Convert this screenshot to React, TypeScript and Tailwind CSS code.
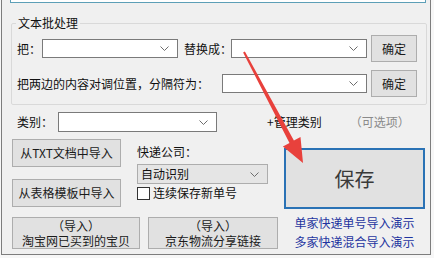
import React from "react";

const font = { fontFamily: '"Noto Sans CJK SC", "Noto Sans", sans-serif' };

function Chevron() {
  return (
    <svg width="9" height="5" viewBox="0 0 9 5" className="mr-[8px] shrink-0">
      <path d="M0.5 0.5 L4.5 4.5 L8.5 0.5" fill="none" stroke="#6d6d6d" strokeWidth="1" />
    </svg>
  );
}

function Combo({ w, text, gray }: { w: string; text?: string; gray?: boolean }) {
  return (
    <div
      className={`${w} h-[19px] shrink-0 flex items-center justify-between border ${
        gray ? "bg-[#e5e5e5] border-[#adadad]" : "bg-white border-[#7a7a7a]"
      }`}
    >
      <span className="pl-[3px] leading-none">{text}</span>
      <Chevron />
    </div>
  );
}

function Btn({ className, children }: { className: string; children: React.ReactNode }) {
  return (
    <button
      className={`shrink-0 whitespace-nowrap flex flex-col items-center justify-center bg-[#e1e1e1] border border-[#adadad] text-[#1a1a1a] ${className}`}
    >
      {children}
    </button>
  );
}

function App() {
  return (
    <div
      className="w-[434px] h-[258px] bg-[#f7f7f7] overflow-hidden relative text-[12px] text-[#111] whitespace-nowrap"
      style={font}
    >
      <div className="ml-[1px] w-[430px] h-[255px] bg-[#f0f0f0] border-l border-r border-b border-[#7d7d7d] flex flex-col">
        {/* top text box edge */}
        <div className="ml-[8px] w-[416px] h-[3px] bg-white border-l border-r border-b border-[#5d9fb7]" />

        {/* 文本批处理 */}
        <fieldset className="ml-[9px] mt-[13px] w-[416px] border border-[#d9d9d9] rounded-[2px] p-0 pb-[7px]">
          <legend className="ml-[4px] px-[2px] leading-[14px]">文本批处理</legend>
          <div className="mt-[5px] h-[27px] grid grid-cols-[25px_136px_53px_136px_50px] items-center pl-[5px]">
            <span>把：</span>
            <Combo w="w-[136px]" />
            <span className="pl-[6px]">替换成：</span>
            <Combo w="w-[136px]" />
            <Btn className="ml-[4px] w-[46px] h-[27px]">确定</Btn>
          </div>
          <div className="mt-[8px] h-[27px] grid grid-cols-[205px_145px_50px] items-center pl-[5px]">
            <span>把两边的内容对调位置，分隔符为：</span>
            <Combo w="w-[145px]" />
            <Btn className="ml-[4px] w-[46px] h-[27px]">确定</Btn>
          </div>
        </fieldset>

        {/* 类别 */}
        <div className="mt-[7px] h-[20px] flex items-center ml-[15px]">
          <span className="w-[41px] shrink-0">类别：</span>
          <Combo w="w-[159px] h-[20px]" />
          <span className="ml-[50px]">+管理类别</span>
          <span className="ml-[28px] text-[#8a8a8a]">（可选项）</span>
        </div>

        {/* lower area */}
        <div className="mt-[7px] flex">
          <div className="ml-[10px] flex flex-col">
            <div className="flex">
              <div className="flex flex-col gap-[12px]">
                <Btn className="w-[109px] h-[28px]">从TXT文档中导入</Btn>
                <Btn className="w-[109px] h-[28px]">从表格模板中导入</Btn>
              </div>
              <div className="ml-[16px] flex flex-col">
                <div className="h-[25px] flex items-center">快递公司：</div>
                <div className="h-[20px] w-[131px] flex items-center justify-between bg-[#e5e5e5] border border-[#adadad]">
                  <span className="pl-[3px]">自动识别</span>
                  <Chevron />
                </div>
                <div className="mt-[2px] h-[14px] flex items-center">
                  <span className="w-[13px] h-[13px] border border-[#333] bg-white" />
                  <span className="ml-[3px]">连续保存新单号</span>
                </div>
              </div>
            </div>
            <div className="mt-[10px] flex">
              <Btn className="w-[128px] h-[32px]">
                <span className="leading-[15px]">（导入）</span>
                <span className="leading-[15px]">淘宝网已买到的宝贝</span>
              </Btn>
              <Btn className="ml-[8px] w-[130px] h-[32px]">
                <span className="leading-[15px]">（导入）</span>
                <span className="leading-[15px]">京东物流分享链接</span>
              </Btn>
            </div>
          </div>

          <div className="ml-[6px] flex flex-col">
            <button className="mt-[9px] w-[141px] h-[61px] bg-[#e1e1e1] border-2 border-[#2a72b5] text-[20px] text-[#3a3a3a]">
              保存
            </button>
            <div className="mt-[4px] leading-[19px] text-center text-[#1f35a0]">
              <div>单家快递单号导入演示</div>
              <div>多家快递混合导入演示</div>
            </div>
          </div>
        </div>
      </div>

      {/* red annotation arrow */}
      <svg className="absolute left-0 top-0 pointer-events-none" width="434" height="258" viewBox="0 0 434 258">
        <polygon
          points="243.1,52.5 244.9,51.5 293.9,140.6 300.5,137.1 303,163 282.9,146.5 289.5,143"
          fill="#e8413c"
        />
      </svg>
    </div>
  );
}

export default App;
